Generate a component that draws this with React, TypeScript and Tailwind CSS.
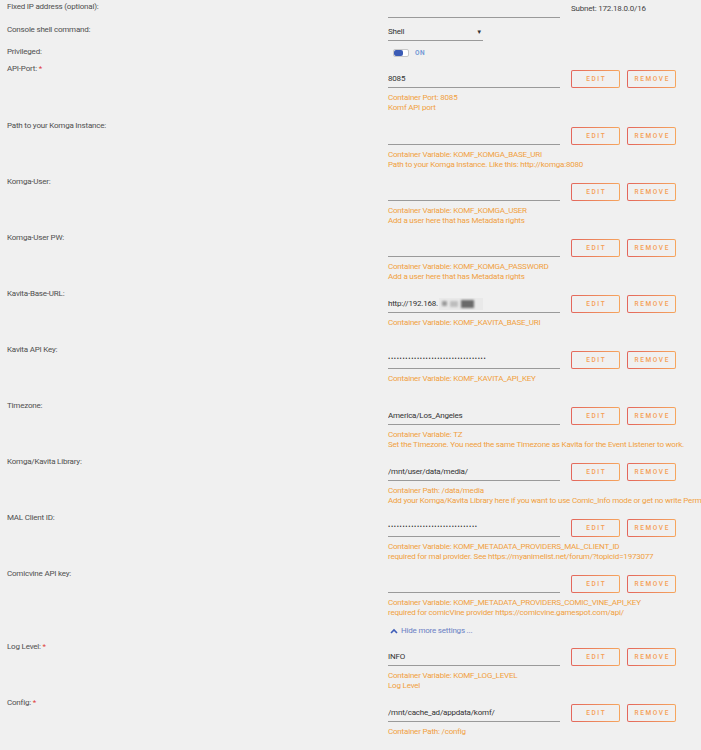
import React from "react";

const ORANGE = "text-[#f0a040]";

function Btn({ children }: { children: React.ReactNode }) {
  return (
    <div className="w-[49px] h-[18px] p-[1.25px] rounded-[2px] bg-[linear-gradient(90deg,#e3665c,#f6a65e)]">
      <div className="w-full h-full bg-[#f0f0f0] rounded-[1px] flex items-center justify-center text-[6.5px] font-medium tracking-[1.6px] text-[#f59f55] leading-none pl-[1.5px]">
        {children}
      </div>
    </div>
  );
}

type Row = {
  label: string;
  req?: boolean;
  value?: React.ReactNode;
  desc: React.ReactNode[];
  h?: string;
};

function Field({ label, req, value, desc, h }: Row) {
  return (
    <div className={`flex ${h ?? "h-[56px]"}`}>
      <div className="w-[388px] shrink-0 pl-[7px] text-[8px] leading-[10px] text-[#4f4f4f]">
        {label}
        {req && <span className="text-[#e04040]"> *</span>}
      </div>
      <div className="flex-1 pt-[6px] min-w-0">
        <div className="flex items-center">
          <div className="w-[172px] h-[18px] border-b-[1.5px] border-[#9a9a9a] flex items-center text-[8px] text-[#333] whitespace-nowrap overflow-hidden">
            {value}
          </div>
          <div className="ml-[11px] flex gap-[7px]">
            <Btn>EDIT</Btn>
            <Btn>REMOVE</Btn>
          </div>
        </div>
        <div className={`mt-[5px] text-[8px] leading-[10px] ${ORANGE} whitespace-nowrap`}>
          {desc.map((d, i) => (
            <div key={i}>{d}</div>
          ))}
        </div>
      </div>
    </div>
  );
}

function Dots({ n }: { n: number }) {
  return <span className="text-[6.5px] tracking-[0.7px]">{"•".repeat(n)}</span>;
}

export default function App() {
  const font = { fontFamily: 'Roboto, "Noto Sans", sans-serif' };
  return (
    <div className="w-[701px] h-[750px] overflow-hidden bg-[#f0f0f0] tracking-[-0.2px]" style={font}>
      {/* Fixed IP */}
      <div className="flex h-[23px]">
        <div className="w-[388px] shrink-0 pl-[7px] pt-[2px] text-[8px] leading-[10px] text-[#4f4f4f]">
          Fixed IP address (optional):
        </div>
        <div className="flex-1 flex items-start">
          <div className="w-[172px] h-[18px] border-b-[1.5px] border-[#9a9a9a]" />
          <div className="ml-[11px] mt-[4px] text-[8px] leading-[10px] text-[#444]">
            Subnet: 172.18.0.0/16
          </div>
        </div>
      </div>
      {/* Console shell */}
      <div className="flex h-[22px]">
        <div className="w-[388px] shrink-0 pl-[7px] pt-[2px] text-[8px] leading-[10px] text-[#4f4f4f]">
          Console shell command:
        </div>
        <div className="flex-1">
          <div className="w-[95px] h-[18px] border-b-[1.5px] border-[#9a9a9a] flex items-center justify-between text-[8px] text-[#333]">
            <span>Shell</span>
            <span className="text-[6px] pr-[1px]">▼</span>
          </div>
        </div>
      </div>
      {/* Privileged */}
      <div className="flex h-[19px]">
        <div className="w-[388px] shrink-0 pl-[7px] pt-[2px] text-[8px] leading-[10px] text-[#4f4f4f]">
          Privileged:
        </div>
        <div className="flex-1 pt-[4px] flex items-start">
          <div className="ml-[5px] w-[16px] h-[8px] rounded-[2px] border border-[#c8c8c8] bg-white flex overflow-hidden">
            <div className="w-[9px] h-full bg-[#3b5bb5] rounded-[2px]" />
          </div>
          <div className="ml-[6px] text-[6.5px] leading-[8px] font-semibold text-[#6f95d4] tracking-[0.5px]">
            ON
          </div>
        </div>
      </div>

      <Field label="API-Port:" req value="8085" desc={["Container Port: 8085", "Komf API port"]} h="h-[57px]" />
      <Field
        label="Path to your Komga Instance:"
        desc={["Container Variable: KOMF_KOMGA_BASE_URI", "Path to your Komga Instance. Like this: http://komga:8080"]}
      />
      <Field label="Komga-User:" desc={["Container Variable: KOMF_KOMGA_USER", "Add a user here that has Metadata rights"]} />
      <Field
        label="Komga-User PW:"
        desc={["Container Variable: KOMF_KOMGA_PASSWORD", "Add a user here that has Metadata rights"]}
      />
      <Field
        label="Kavita-Base-URL:"
        value={
          <span className="flex items-center">
            http://192.168.
            <span className="ml-[1px] w-[44px] h-[12px] bg-[#e9e9e9] flex items-center gap-[3px] pl-[3px]">
              <span className="w-[5px] h-[5px] bg-[#9a9a9a] blur-[0.8px]" />
              <span className="w-[8px] h-[6px] bg-[#bdbdbd] blur-[0.8px]" />
              <span className="w-[13px] h-[8px] bg-[#6a6a6a] blur-[0.8px]" />
            </span>
          </span>
        }
        desc={["Container Variable: KOMF_KAVITA_BASE_URI"]}
      />
      <Field label="Kavita API Key:" value={<Dots n={34} />} desc={["Container Variable: KOMF_KAVITA_API_KEY"]} />
      <Field
        label="Timezone:"
        value="America/Los_Angeles"
        desc={[
          "Container Variable: TZ",
          "Set the Timezone. You need the same Timezone as Kavita for the Event Listener to work.",
        ]}
      />
      <Field
        label="Komga/Kavita Library:"
        value="/mnt/user/data/media/"
        desc={[
          "Container Path: /data/media",
          "Add your Komga/Kavita Library here if you want to use Comic_Info mode or get no write Permissions",
        ]}
      />
      <Field
        label="MAL Client ID:"
        value={<Dots n={31} />}
        desc={[
          "Container Variable: KOMF_METADATA_PROVIDERS_MAL_CLIENT_ID",
          "required for mal provider. See https://myanimelist.net/forum/?topicid=1973077",
        ]}
      />
      <Field
        label="Comicvine API key:"
        desc={[
          "Container Variable: KOMF_METADATA_PROVIDERS_COMIC_VINE_API_KEY",
          "required for comicVine provider https://comicvine.gamespot.com/api/",
        ]}
      />
      <div className="h-[17px] pl-[390px] pt-[1px] flex items-start">
        <div className="flex items-center h-[10px] text-[8px] leading-[10px] text-[#6a7fc4]">
          <svg width="8" height="6" viewBox="0 0 8 6" className="mr-[3px]">
            <path d="M1 5 L4 2 L7 5" stroke="#3d5cb8" strokeWidth="1.6" fill="none" />
          </svg>
          Hide more settings ...
        </div>
      </div>
      <Field label="Log Level:" req value="INFO" desc={["Container Variable: KOMF_LOG_LEVEL", "Log Level"]} />
      <Field label="Config:" req value="/mnt/cache_ad/appdata/komf/" desc={["Container Path: /config"]} />
    </div>
  );
}
